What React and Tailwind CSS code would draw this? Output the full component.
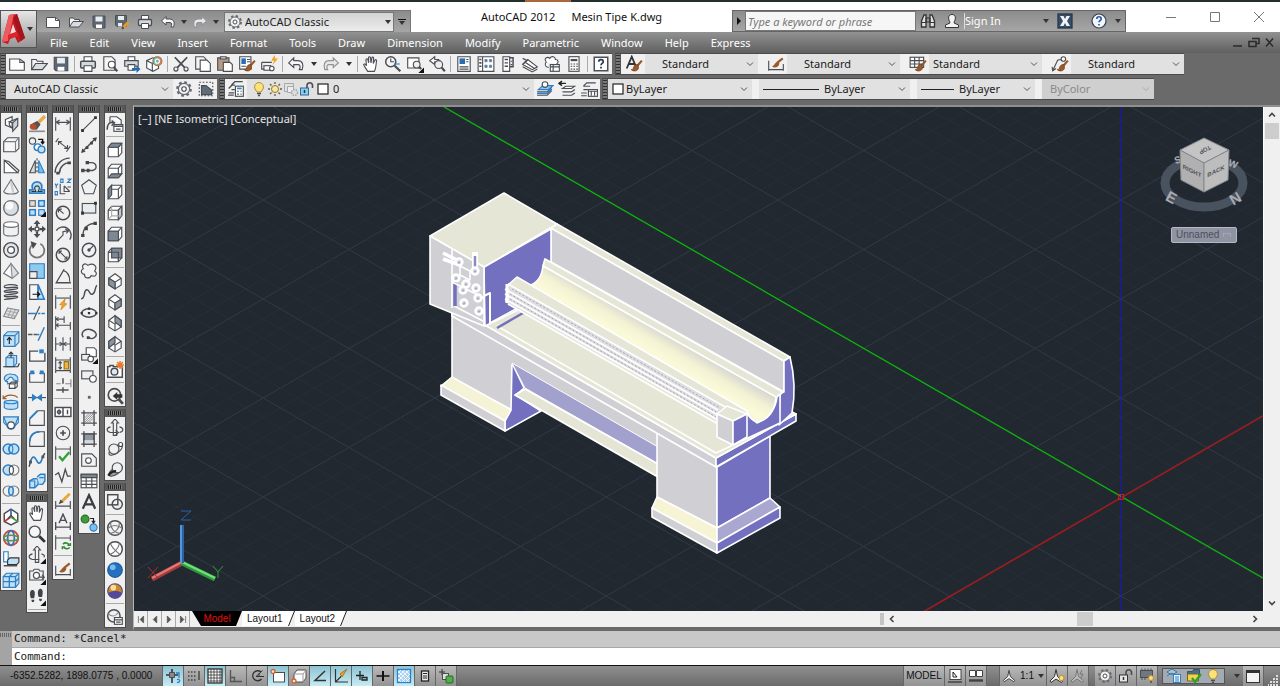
import React, { useState } from "react";

const B = "#2e7fc6";
const LB = "#bfe0f5";
const BR = "#9a5a2c";

const brush = (
  <>
    <path d="M15 5l-4 4.500" stroke={BR} strokeWidth="2" />
    <path d="M11.500 8.500c-2-.5-3.500 1-4 3-.3 1-1 1.500-2 1.500 2 2 6 1.500 6.500-1.500z" fill={BR} stroke="#6d3a17" strokeWidth=".6" />
  </>
);
const cube = (
  <>
    <path d="M2 5.500L5 2h9v8.500L11 14H2z" fill="#fdfdfd" />
    <path d="M2 5.500h9V14M11 5.500L14 2" />
  </>
);
const dimEnds = <path d="M1.500 2v12M14.500 2v12" />;
const iso = (
  <>
    <path d="M8 1.500l5.500 4v6L8 15l-5.500-3.500v-6z" fill="#fbfbfb" />
    <path d="M2.500 5.500L8 9l5.500-3.500M8 9v6" />
  </>
);

const ICONS = {
  new: <><path d="M1.500 3.500h9l4 3v7h-13z" fill="#fff" /><path d="M10.500 3.500v3h4" /></>,
  open: <><path d="M1.500 13V4h4l1 1.500h5V8" fill="#f4f4f4" /><path d="M1.500 13L5 7.500h10.500L11 13z" fill="#d9dde2" /></>,
  save: <><path d="M2 2h12v12H3.500L2 12.500z" fill="#5d6774" /><path d="M4.500 2.500h7v5h-7z" fill="#e8edf2" stroke="none" /><path d="M5 10.500h6V14H5z" fill="#fff" stroke="none" /></>,
  saveas: <><path d="M1.500 1.500h11v11H3L1.500 11z" fill="#5d6774" /><path d="M4 2h6v4H4zM4 9h4v3.500H4z" fill="#e8edf2" stroke="none" /><path d="M14.500 8L9 14" stroke="#e59a28" strokeWidth="3" /><path d="M8 15l.5-2 1.500 1z" fill="#333" /></>,
  print: <><path d="M4.500 6V1.500h7V6" fill="#fff" /><rect x="1.500" y="5.500" width="13" height="6" rx="1" fill="#d5d8dc" strokeWidth="1.300" /><path d="M4.500 9.500h7v5h-7z" fill="#fff" /></>,
  preview: <><path d="M2.500 1.500h7l3 3v9h-10z" fill="#f7f7f7" /><circle cx="9.500" cy="8.500" r="3" fill="#fff" /><path d="M11.500 11l3 3.500" strokeWidth="2" /></>,
  publish: <><path d="M4.500 5V1.500h6V5" fill="#fff" /><path d="M1.500 5h12v5h-12z" fill="#d5d8dc" /><path d="M4.500 8.500h6v5h-6z" fill="#fff" /><path d="M8 11.500h4V9l3.500 3.500L12 16v-2.500H8z" fill="#2468ae" stroke="none" /></>,
  dwf: <><path d="M1.500 5L7 2.500l5 2V12l-5 2.500-5.500-3z" fill="#fff" /><path d="M1.500 5l5 2.500L12 5M6.500 7.500v7" /><circle cx="11" cy="5.500" r="4" fill="#7fc36a" stroke="#777" /><path d="M11 1.500a4 4 0 010 8z" fill="#e27b4b" stroke="none" /><circle cx="11" cy="5.500" r="1.800" fill="#5bb5e0" stroke="#fff" /></>,
  cut: <><path d="M2.500 2l9 9.500M13.500 2l-9 9.500" strokeWidth="1.600" /><circle cx="3.500" cy="12.500" r="1.800" fill="#eee" /><circle cx="12.500" cy="12.500" r="1.800" fill="#eee" /></>,
  copy: <><path d="M1.500 1.500h7l2 2v9h-9z" fill="#f3f3f3" /><path d="M5.500 4.500h6l3 3v7h-9z" fill="#fff" /></>,
  paste: <><path d="M1.500 2.500h10v11h-10z" fill="#b39b86" /><path d="M4 1.500h5v2H4z" fill="#ddd" /><path d="M6.500 6.500h6l2 2v6h-8z" fill="#fff" /></>,
  match: <><path d="M1.500 1.500h10v11h-10z" fill="#fff" /><path d="M3 3h4v5H3z" fill="#2b6cb0" stroke="none" /><path d="M8 4h3M8 6h3M3 10h4" />{brush}</>,
  block: <><path d="M1.500 6.500h9M1.500 6.500v6h9" /><rect x="3.500" y="9.500" width="6" height="4" fill="#fff" /><circle cx="10.500" cy="12" r="2" fill="#fff" /><path d="M13 0l-3 5h2.500L11 9l5-6h-2.500z" fill="#f3a623" stroke="none" /></>,
  undo: <path d="M6 2.500L1.500 7 6 11V8.500h4c2 0 2 2.500 1 4.500h2.500c1.500-4 .5-8-4-8H6z" fill="#f8f8f8" />,
  redo: <path d="M10 2.500L14.500 7 10 11V8.500H6c-2 0-2 2.500-1 4.500H2.500c-1.500-4-.5-8 4-8H10z" fill="#e8e8e8" stroke="#8d9095" />,
  pan: <path d="M5 14.500c-1-2-3-4-3.500-6 .5-1 1.500-.5 2.500 1L3.500 4c.5-1 1.500-.8 1.700.2L6 7l-.2-4.700c.3-1 1.500-1 1.700 0L8 7l.8-4.500c.4-1 1.500-.7 1.500.3L10 7.500l1.500-3c.6-.8 1.600-.3 1.400.7C12.500 8 12.500 12 11 14.500z" fill="#fff" />,
  zoomrt: <><circle cx="6" cy="6" r="4.500" fill="#f5f5f5" strokeWidth="1.300" /><path d="M6 3v3h3" /><path d="M9.500 9.500l5 5" strokeWidth="2" /><path d="M9 8h5" stroke={B} /></>,
  zoomwin: <><path d="M1.500 2.500h10v9h-10z" fill="#fff" /><circle cx="9.500" cy="8.500" r="3" fill="#eee" /><path d="M11.500 10.500l2 2" strokeWidth="2" /><path d="M16 11v5h-5z" fill="#111" stroke="none" /></>,
  zoomprev: <><path d="M6 1.500L1.500 5 6 8.500V6h3.500V4H6z" fill="#fff" /><circle cx="9.500" cy="8.500" r="3.500" fill="#eee" /><path d="M12 11l3 3.500" strokeWidth="2" /></>,
  props: <><path d="M2.500 1.500h11v13h-11z" fill="#fff" /><path d="M4 3h5v5H4z" fill="#2b6cb0" stroke="none" /><path d="M10 4h2M10 6h2M4 10.500h8M4 12.500h8" /></>,
  dcenter: <><path d="M1 1.500h14v13H1zM5 1.500v13" fill="#fff" /><path d="M2 4h2M2 7h2M2 10h2" strokeWidth="1.500" /><path d="M7 4h2v2H7zM11 4h2v2h-2zM7 9h2v2H7zM11 9h2v2h-2z" fill="#5d7894" stroke="#5d7894" strokeWidth=".6" /></>,
  palette: <><path d="M3.500 1.500h6v13h-6z" fill="#fff" /><path d="M9.500 2.500h3v8h-3M5 4h3M5 7h3M5 10h3M11 5v1M11 8v1" strokeWidth="1.300" /></>,
  sheets: <><path d="M1.500 8.500L10 13l4.500-2.500L6 4z" fill="#fff" /><path d="M1.500 10.500L10 15l4.500-2.500M3 6l9 6M1.500 3l4 2-4 3" /></>,
  markup: <><path d="M3 6c-3-3 1-5 3-3 2-3 5-1 5 1 3 0 3 3 1 4M3 6c-2 2-1 5 2 5" fill="#fff" /><rect x="6.500" y="8.500" width="8" height="6" fill="#fff" /><path d="M6.500 10.500h8M9 8.500v6" /></>,
  calc: <><rect x="3.500" y="1.500" width="9" height="13" fill="#fff" /><path d="M5 4.500h6" strokeWidth="2" /><path d="M5 8h1.500M7.500 8H9M10 8h1.500M5 10h1.500M7.500 10H9M10 10h1.500M5 12.500h1.500M7.500 12.500H9M10 12.500h1.500" /></>,
  helpbox: <><rect x="2" y="2" width="12" height="12" fill="#fff" strokeWidth="1.300" /><path d="M6 6c0-2.500 4-2.500 4 0 0 1.500-2 1.500-2 3M8 10.500v1.500" stroke="#23374f" strokeWidth="1.500" /></>,
  textstyle: <><path d="M1.500 12L6 1.500 10 11M3 8h5.500" stroke="#333" strokeWidth="1.600" />{brush}</>,
  dimstyle: <><path d="M1.500 5v9M14.500 8v6M1.500 13h13" /><path d="M14 3L9 7" stroke={BR} strokeWidth="2" /><path d="M10 6c-3 0-3 3-5.500 4.500 3 1.500 6 0 6.500-3z" fill={BR} stroke="none" /></>,
  tablestyle: <><rect x="1" y="2" width="12" height="9" fill="#fff" /><path d="M1 5h12M1 8h12M5 2v9M9 2v9" />{brush}</>,
  mleader: <><path d="M1.500 14L6 4.500 10 4M1 10.500l.5 3.500 3-2" /><circle cx="11" cy="3.500" r="2" fill="#fff" />{brush}</>,
  gear: <><circle cx="8" cy="8" r="6" strokeWidth="2" strokeDasharray="2.400 2.310" stroke="#666a70" /><circle cx="8" cy="8" r="5" fill="#f2f2f2" stroke="#666a70" /><circle cx="8" cy="8" r="2" fill="#fff" /></>,
  wsset: <><path d="M2 2h12v12H2z" strokeDasharray="1.500 1.500" /><path d="M4 13V5h4l5 4v4z" fill="#5f6c7a" /></>,
  layers: <><path d="M4 4.500l3-3h7M4 8.500h3M1.500 11.500h5M4 4.500h3M1.500 7.500l3-3M1 13.500h5" strokeWidth="1.200" /><rect x="7.500" y="5.500" width="7" height="9" fill="#fff" /><path d="M9 7.500h4" stroke={B} strokeWidth="1.500" /><path d="M9 10h1.500M12 10h1M9 12.500h1.500M12 12.500h1" /></>,
  bulb: <><path d="M8 1.500a4.500 4.500 0 014 6.500L10 11H6L4 8a4.500 4.500 0 014-6.500z" fill="#fbe27a" stroke="#b08e37" /><path d="M6 12.500h4M7 14.500h2" strokeWidth="1.500" /></>,
  sun: <><circle cx="8" cy="8" r="3.500" fill="#fbe79a" stroke="#8a7b4a" /><path d="M8 1v2M8 13v2M1 8h2M13 8h2M3 3l1.500 1.500M11.500 11.500L13 13M13 3l-1.500 1.500M4.500 11.500L3 13" stroke="#6b5d33" strokeWidth="1.300" /></>,
  vpfreeze: <g stroke="#a5a8ac"><path d="M1.500 2.500h9v8h-9z" /><path d="M4.500 5.500h6v6h-6z" fill="#eee" /><circle cx="11.500" cy="11.500" r="3" fill="#ddd" strokeDasharray="1.500 1" strokeWidth="1.500" /></g>,
  unlock: <><rect x="1.500" y="7" width="8" height="7" fill="#8ecdf0" stroke="#2c6d9a" /><path d="M8 7V4a2.800 2.800 0 015.500 0v3" strokeWidth="1.600" /><path d="M5.500 9v3" stroke="#1d3c55" strokeWidth="1.500" /></>,
  unlockgray: <><rect x="1.500" y="7" width="8" height="7" fill="#e6e6e6" stroke="#333" /><path d="M8 7V4a2.800 2.800 0 015.500 0v3" strokeWidth="1.600" /><path d="M5.500 9v3" stroke="#333" strokeWidth="1.500" /></>,
  white: <rect x="3" y="3" width="10" height="10" fill="#fff" stroke="#222" strokeWidth="1.200" />,
  laycur: <><path d="M1 13.500h9l4-4M1 10.500h9l4-4" /><path d="M2 8.500l4-3.500h9l-4 3.500z" fill="#8ac6ee" stroke={B} /><circle cx="8" cy="4" r="2.500" fill="#fff" /><path d="M1 12h9l4-4" stroke={B} strokeWidth="1.500" /></>,
  layprev: <><path d="M4 7.500l3-2h8l-3 2zM4 10.500h8l3-2M4 13.500h8l3-2" fill="#fff" /><path d="M1 3h6M3.500 1L1 3l2.500 2" stroke="#222" strokeWidth="1.300" /></>,
  layiso: <><path d="M3 5.500l3-3h8M3 8.500h4M1 11.500h5M3 5.500h6M1 14h5" /><rect x="7.500" y="8.500" width="8" height="6" fill="#fff" /><path d="M7.500 10h8M10 10v4M13 10v4" /></>,
  polysolid: <><path d="M3 4l6-2.500v10L3 9z" fill="#fff" /><path d="M6.500 6l7.500-3v6.500l-4.500 5V7z" fill="#cfd3d7" /><path d="M9.500 7L14 3M6.500 6v3l3 3" /></>,
  box: <><path d="M1.500 5L5 1.500h10V11l-3 3H1.500z" fill="#f6f6f6" /><path d="M1.500 5h10.500v9M12 5l3-3.500" stroke="#7b7f85" /></>,
  wedge: <><path d="M2 3v11h12z" fill="#fff" /><path d="M2 3l4 1 9 8-1 2" /></>,
  cone: <><path d="M8 1.500L1.500 12c1 3 12 3 13 0z" fill="#f2f2f2" stroke="#6b6f75" /><path d="M8 3l2 10" stroke="#c9ccd0" strokeWidth="2" /></>,
  sphere: <><circle cx="8" cy="8" r="6.500" fill="#d9dee3" strokeWidth="1.200" stroke="#6b6f75" /><circle cx="6.500" cy="6" r="3.500" fill="#f8fafb" stroke="none" /></>,
  cylinder: <><path d="M1.500 4v8c0 3 13 3 13 0V4" fill="#f0f1f2" stroke="#6b6f75" /><ellipse cx="8" cy="4" rx="6.500" ry="2.500" fill="#fff" stroke="#6b6f75" /></>,
  torus: <><circle cx="8" cy="8" r="6.500" fill="#e3e6e9" strokeWidth="1.200" /><circle cx="8" cy="8" r="3" fill="#fff" strokeWidth="1.200" /></>,
  pyramid: <><path d="M8 1.500L1.500 10 9 14.500l5.500-4.500z" fill="#fafafa" stroke="#6b6f75" /><path d="M8 1.500l1 13 5.500-4.500z" fill="#dcdfe2" stroke="#8b8f94" /></>,
  helix: <path d="M14 2.500c-4-2-12-1-12 1s12-1 12 1-12 1-12 3 12-1 12 1-12 1-12 3 12-1 12 1-12 1-12 2.500" strokeWidth="1.200" />,
  mesh: <><path d="M5 3.500l10 2L11 13 1.500 11z" fill="#e3e3e3" stroke="#85888c" /><path d="M4 6l9.500 2M3 8.500L12 11M8.500 4L5 12M12 5l-4 7.500" stroke="#a5a8ac" /></>,
  extrude: <><path d="M1.500 5L5 1.500h10V11l-3.500 3.500h-10z" fill={LB} stroke={B} /><path d="M1.500 5h10v9.500M11.500 5L15 1.500" stroke={B} /><path d="M6.500 12.500V7M4.500 9l2-2.500 2 2.500" stroke="#222" /></>,
  presspull: <><path d="M3.500 6L6 4h7v7l-2.500 3h-7z" fill={LB} stroke={B} /><path d="M3.500 6h7v8" stroke={B} /><path d="M1 14h13l1.500-3M8 6V1M6 3l2-2 2 2" stroke="#333" /></>,
  sweep: <><path d="M3 8c-3-4 2-7 6-6 4 0 6 3 5 6l-4-1c0-3-4-3-4-1z" fill={LB} stroke={B} /><path d="M3 8l5 3 5-3M5 8v3" stroke={B} /><path d="M6.500 10.500h5v4h-5zM6.500 10.500L8.500 9h5l-2 1.500M13.500 9v4l-2 1.500" fill="#fff" /></>,
  revolve: <><path d="M2 8c1-2 11-2 12 0v5c-2 2-10 2-12 0z" fill={LB} stroke={B} /><path d="M2 8c2 2 10 2 12 0" stroke={B} /><path d="M1 5c3-4 10-4 13-1M1 2v3h3" stroke={BR} /></>,
  loft: <><path d="M1.500 2.500h13L12 9c-1 6-7 6-8 0z" fill={LB} stroke={B} /><path d="M1.500 2.500v5l3 3M14.500 2.500v5l-3 3" stroke={B} /><circle cx="8" cy="10" r="3" fill="#fff" /></>,
  union: <><circle cx="5.500" cy="8" r="4.500" fill={LB} stroke={B} strokeWidth="1.300" /><circle cx="10.500" cy="8" r="4.500" fill={LB} stroke={B} strokeWidth="1.300" /><ellipse cx="8" cy="8" rx="1.600" ry="3.500" stroke={B} /></>,
  subtract: <><circle cx="10.500" cy="8" r="4.500" fill="#f4f4f4" stroke="#777" /><circle cx="5.500" cy="8" r="4.500" fill={LB} stroke={B} strokeWidth="1.300" /><ellipse cx="8.300" cy="8" rx="1.800" ry="3.500" fill="#fff" /></>,
  intersect: <><circle cx="5.500" cy="8" r="4.500" stroke="#777" /><circle cx="10.500" cy="8" r="4.500" stroke="#777" /><ellipse cx="8" cy="8" rx="2" ry="3.700" fill={LB} stroke={B} strokeWidth="1.300" /></>,
  move3d: <><path d="M8 1l6 4v7l-6 3-6-3V5z" fill="#fff" strokeWidth="1.300" /><path d="M8 8V1" stroke="#2a65c8" strokeWidth="1.500" /><path d="M8 8l-6 4" stroke="#c33" strokeWidth="1.500" /><path d="M8 8l6 4" stroke="#3a3" strokeWidth="1.500" /><path d="M5 9.500l3-3 3 3" /></>,
  rotate3d: <><circle cx="8" cy="8" r="6.500" fill="#f7e0de" stroke="#c0483c" strokeWidth="1.500" /><ellipse cx="8" cy="8" rx="3" ry="6.500" stroke="#3c6fc0" strokeWidth="1.500" /><ellipse cx="8" cy="8" rx="6.500" ry="2.500" stroke="#4a9a55" strokeWidth="1.300" /></>,
  align3d: <><path d="M1.500 1.500h4v9h-4z" fill="#fff" stroke={B} /><path d="M5 9l2-2h8v4l-2 2H5z" fill={LB} stroke="#333" /><path d="M1.500 14h12" strokeWidth="1.300" /></>,
  array3d: <><path d="M1 5l3-3h11v9l-3 3.500H1z" fill={LB} stroke={B} /><path d="M1 5h11v9.500M12 5l3-3M6.500 5v9.500M1 9.500h11l3-3M6.500 5l3-3" stroke={B} strokeWidth="1.200" /></>,
  erase: <><path d="M15 1L7 9" stroke="#e9a94d" strokeWidth="3" /><path d="M8 6l2.500 2.500-3 4-4-.5-1-3z" fill="#555" /><ellipse cx="4.500" cy="10.500" rx="3" ry="2.500" fill="#c24a28" stroke="none" /><path d="M1 14.500h14" stroke="#8a8d91" strokeWidth="1.500" /></>,
  copyobj: <><circle cx="4" cy="4.500" r="2.800" /><path d="M9 3h4v3M11.500 5l1.500 1.800L14.500 5" stroke="#111" strokeWidth="1.300" /><circle cx="8.500" cy="10" r="3" fill="#fff" stroke={B} strokeWidth="1.300" /><circle cx="12" cy="12" r="3" fill={LB} stroke={B} strokeWidth="1.300" /></>,
  mirror: <><path d="M6.500 3v11H1.500z" fill="#d9dcdf" /><path d="M9.500 3v11h5z" fill="#78bce9" stroke={B} /><path d="M8 1v14" strokeDasharray="2 1.500" /></>,
  offset: <><path d="M1.500 13.500v-3h3c-2-4 0-7 3.500-7s5.500 3 3.500 7h3v3z" fill={LB} stroke={B} strokeWidth="1.500" /><path d="M3 12h4c-2-3-1-5 1-5s3 2 1 5h4" stroke="#333" /></>,
  array: <><rect x="1.500" y="1.500" width="5" height="5" fill="#ddd" stroke="#666" /><rect x="9.500" y="1.500" width="5" height="5" fill={LB} stroke={B} strokeWidth="1.300" /><rect x="1.500" y="9.500" width="5" height="5" fill={LB} stroke={B} strokeWidth="1.300" /><rect x="9.500" y="9.500" width="5" height="5" fill={LB} stroke={B} /><path d="M16 11v5h-5z" fill="#111" stroke="none" /></>,
  move: <><rect x="6.500" y="6.500" width="3" height="3" fill="#fff" /><path d="M8 0l3 3.500H9V6H7V3.500H5zM8 16l3-3.500H9V10H7v2.500H5zM0 8l3.500-3v2H6v2H3.500v2zM16 8l-3.500-3v2H10v2h2.500v2z" fill="#4a4e54" stroke="none" /></>,
  rotate: <><path d="M5 2.500a6.500 6.500 0 106 0" strokeWidth="1.600" stroke="#777" /><path d="M3 1l4 1.500L4.500 6z" fill="#444" /></>,
  scale: <><path d="M1.500 1.500h13v13h-13z" fill="#8fcbf0" stroke={B} /><path d="M1.500 8.500h6.500v6H1.500z" fill="#eee" /></>,
  stretch: <><path d="M1.500 1.500H9v13H1.500z" fill="#f5f5f5" /><path d="M9 1.500L14.500 14.500H9z" fill={LB} stroke={B} strokeWidth="1.400" /><path d="M4 10h6M8 8l2.500 2L8 12" stroke="#111" /></>,
  trim: <><path d="M0 8.500h7M9 8.500h2M12 8.500h3" stroke={B} strokeWidth="1.300" /><path d="M10.500 2L5 14" /></>,
  extend: <><path d="M0 8.500h4M5 8.500h3" stroke="#555" strokeWidth="1.300" /><path d="M8 8.500h2" stroke={B} strokeWidth="1.300" /><path d="M14.500 2L9 14" stroke={B} strokeWidth="1.300" /></>,
  breakpt: <><path d="M9 4.500H1.500v9H15V6" fill="#f5f5f5" strokeWidth="1.200" /><path d="M10 3h4v3.500h-4z" fill={B} stroke="none" /></>,
  breakobj: <><path d="M6 5.500H1.500v8h13v-8H10" fill="#f5f5f5" /><path d="M2 3h3.500v3.500H2zM10.500 3H14v3.500h-3.500z" fill={B} stroke="none" /></>,
  join: <><path d="M0 8.500h16" /><path d="M4 6l3.500 2.500L4 11zM12 6L8.500 8.500 12 11z" fill={B} stroke={B} /></>,
  chamfer: <><path d="M1.500 14.500V9L9 1.500h5.500v13z" fill="#f2f2f2" /><path d="M1.500 8.500L8.500 1.500" stroke={B} strokeWidth="1.500" /></>,
  fillet: <><path d="M1.500 14.500V11C1.500 5 5 1.500 11 1.500h3.500v13z" fill="#f2f2f2" /><path d="M1.500 10C2 5 5 2 10 1.500" stroke={B} strokeWidth="1.500" /></>,
  blend: <><path d="M1 14l1-4M13 5l2-3" strokeWidth="1.300" /><path d="M2 10c2-7 4-5 6-1s4 1 5-4" stroke={B} strokeWidth="1.500" /><path d="M1 8.500h2.500V11H1zM12 4h2.500v2.500H12z" fill="#555" stroke="none" /></>,
  explode: <><path d="M1.500 8L5 6h4v5l-3 3H1.500z" fill={LB} stroke={B} strokeWidth="1.300" /><path d="M8 4.500L11 2h4v6l-2 3h-3" fill={LB} stroke={B} strokeWidth="1.300" /><path d="M1.500 8H6v6M10 5h4" stroke={B} /></>,
  zoom: <><circle cx="6" cy="6" r="5" fill="#f5f7f8" strokeWidth="1.300" /><path d="M10 10l5 5" stroke="#333" strokeWidth="2.500" /></>,
  orbit: <><path d="M8 0l3 3.500H9.500v11h-3v-11H5z" fill="#f4f4f4" /><path d="M4 7c-4 1-4 4 0 5h6M12 7c4 1 4 4 0 5M8.500 10l2.500 2-2.500 2.500" /></>,
  orbitdd: <><path d="M8 0l3 3.500H9.500v11h-3v-11H5z" fill="#f4f4f4" /><path d="M4 7c-4 1-4 4 0 5h6M12 7c3 1 3 2 2 3" /><path d="M16 11v5h-5z" fill="#111" stroke="none" /></>,
  cam: <><path d="M1.500 3.500h3l1-1.500h4l1 1.500h3v8h-12z" fill="#f1f1f1" /><circle cx="7.500" cy="7.500" r="2.700" fill="#fff" /><path d="M10 9h4M12.500 7l2 2-2 2" /><path d="M16 11v5h-5z" fill="#111" stroke="none" /></>,
  walk: <><path d="M3 2c2-1 3.500 1 3 4L5.500 9h-3C1.500 6 1.500 3 3 2zM3 10.500h2.500c.5 3-2.500 3-2.500 0zM10 1c2-1 3.500 1 3 4l-.5 3h-3C8.500 5 8.500 2 10 1zM9.800 9.500h2.500c.5 3-2.500 3-2.500 0z" fill="#3f4348" stroke="none" /><path d="M16 11v5h-5z" fill="#111" stroke="none" /></>,
  dlinear: <>{dimEnds}<path d="M2 6.500h12M5 4.500l-3 2 3 2M11 4.500l3 2-3 2" /></>,
  daligned: <><path d="M4 5l8 6M4 2L1.500 5.500M14.500 9L11 14M4 8V5h3M12 8v3H9" /></>,
  darc: <><path d="M1 14C1 7 7 1 14 1M5 14c0-5 4-9 9-9" strokeWidth="1.300" /><path d="M2 13h3v2.500H2zM12 4h3v2.500h-3z" fill="#444" stroke="none" /></>,
  dord: <><path d="M5.500 5v9H10M9 7v5h5M9 7l5 5M12 8h3" /><path d="M1 5l1 2 1.500-2M2 7v2M1 12h2v3H1zM6 1h2v3H6zM12 1h3l-3 3h3" stroke={B} /></>,
  dradius: <><circle cx="8" cy="8" r="6" strokeWidth="1.300" /><path d="M8.500 8.500L4 4.500M4 7.500v-3h3" /></>,
  djog: <><path d="M2 5a7 7 0 0112 8" strokeWidth="1.200" /><path d="M3 14l5-5V6l5-1M10 3.500l3 1.500-2 2.500" /></>,
  ddia: <><circle cx="8" cy="8" r="6" strokeWidth="1.300" /><path d="M4.500 4.500l7 7M4.500 7V4.500H7M11.500 9v2.500H9" /></>,
  dang: <><path d="M9 2L2 14h13" strokeWidth="1.200" /><path d="M8 3c4 1 6 5 6 10" /></>,
  dquick: <>{dimEnds}<path d="M2 4.500h12" /><path d="M10 5l-5 5.500h2.500L6 15l5.500-5.500H9z" fill="#f3a623" stroke="#b87414" strokeWidth=".5" /></>,
  dbase: <><path d="M1.500 2v12M9 2v6M14.500 7v7M2 4.500h7M2 10h12" /><path d="M4 3L2 4.500 4 6M4 8.500L2 10l2 1.500" /></>,
  dcont: <><path d="M1.500 2v12M8 2v12M14.500 2v12M2 8h12" /><path d="M5 6.500L7.500 8 5 9.500M11 6.500L8.500 8l2.500 1.500" /></>,
  dspace: <><path d="M1.500 1v14M14.500 1v14M2 3.500h12M2 13h12" /><path d="M9 5h4v6.500H9z" fill="#f0b53c" stroke="#9a6f12" /><path d="M5.500 5v6.500M4 6.500L5.500 5 7 6.500M4 10l1.500 1.500L7 10" /></>,
  dbreak: <><path d="M8 1v5M8 9v5M2 11.500h11" strokeWidth="1.300" /><path d="M2 6h4M10 6h5M15 2v7" stroke="#888" /></>,
  tol: <><rect x="1" y="4" width="14" height="8" fill="#fff" strokeWidth="1.300" /><path d="M8 4v8M12 6v4" strokeWidth="1.300" /><circle cx="4.500" cy="8" r="1.500" /><path d="M4.500 5.500v5M2.500 8h4" /></>,
  center: <><circle cx="8" cy="8" r="6" /><path d="M8 5.500v5M5.500 8h5" strokeWidth="1.500" /></>,
  inspect: <><path d="M1.500 1v12M14.500 1v8M2 3.500h12" /><path d="M4.500 10l3 3.500 6-7" stroke="#2fa02f" strokeWidth="2" /></>,
  jogline: <path d="M1 8l3-2 3 8 3-11 2 6h3" strokeWidth="1.200" />,
  dimedit: <><path d="M1.500 8v7M14.500 8v7M2 12.500h12" /><path d="M14 1.500L7 8.500" stroke="#e6a73c" strokeWidth="2.600" /><path d="M5 10l1-2.500L7.500 9z" fill="#333" /></>,
  dimtext: <><path d="M1.500 8v7M14.500 8v7M2 12.500h12M4.500 9L8 1l3.500 8M6 6.500h4" strokeWidth="1.200" /></>,
  dimupd: <><path d="M1.500 1v13M14.500 1v5M2 3.500h12" /><path d="M8 9c2-2 5-1 5 1M14 12c-2 2-5 1-5-1M12 10h2.500V8M9.500 11.500H7.500v2" stroke="#2d8a2d" strokeWidth="1.400" /></>,
  line: <><path d="M2.500 13.500l11-11" /><path d="M1 12.500h2.500V15H1zM12.500 1H15v2.500h-2.500z" fill="#333" stroke="none" /></>,
  xline: <><path d="M2 14L14 2" strokeWidth="1.300" /><path d="M1 15l1-4 3 3zM15 1l-4 1 3 3zM5 9h2.500v2.500H5zM9 5h2.500v2.500H9z" fill="#444" stroke="none" /></>,
  pline: <><path d="M2 12h9c5-1 4-7-1-7H7" strokeWidth="1.200" /><path d="M1 10.500h3v3H1zM6 10.500h2.500v3H6zM5 3.500h3v3H5z" fill="#444" stroke="none" /></>,
  polygon: <path d="M8 1.500l6.500 5L12 14H4L1.500 6.500z" fill="#f0f1f2" />,
  rect: <><rect x="2" y="4" width="12" height="8.500" fill="#e9ecee" /><path d="M1 11h2.500v3H1zM12.500 2.500H15V5h-2.500z" fill="#333" stroke="none" /></>,
  arc: <><path d="M2.500 13.500C3 7 6 3.500 13 3" strokeWidth="1.200" /><path d="M1 12.500h3V15H1zM4 6h3v3H4zM12 1.500h3v3h-3z" fill="#444" stroke="none" /></>,
  circle: <><circle cx="8" cy="8" r="6" fill="#f0f1f2" strokeWidth="1.300" /><circle cx="8" cy="8" r="1" fill="#333" /><path d="M8 8l4-4" /></>,
  cloud: <path d="M7 3c-3-3-6 0-4 3-3 1-2 5 1 5 0 4 5 4 6 1 4 2 6-2 3-4 3-4-1-8-6-5z" fill="#f3f3f3" />,
  spline: <path d="M1 14c4 0 2-8 5-8s2 5 5 4 2-6 4-8" strokeWidth="1.300" />,
  ellipse: <><ellipse cx="8" cy="8" rx="6.500" ry="3.700" fill="#eef0f1" strokeWidth="1.300" /><path d="M7 3h2v2H7zM7 7.200h2v1.800H7zM.5 7h2v2h-2zM13.500 7h2v2h-2z" fill="#333" stroke="none" /></>,
  earc: <><path d="M3 11C0 7 4 3 9 4s7 5 4 7-4 1-5 0" strokeWidth="1.300" /><path d="M6 10h2.500v2.500H6z" fill="#444" stroke="none" /></>,
  insert: <><path d="M5.500 1.500h7l2 2v6h-9z" fill="#fff" /><rect x="1.500" y="7.500" width="7" height="5" fill="#eee" /><circle cx="9.500" cy="11.500" r="2.500" fill="#fff" /><path d="M16 11v5h-5z" fill="#111" stroke="none" /></>,
  mkblock: <><rect x="1.500" y="3.500" width="10" height="7" fill="#eef0f1" /><circle cx="11.500" cy="10.500" r="3" fill="#fff" /></>,
  point: <path d="M7 7h2.500v2.500H7z" fill="#666" stroke="none" />,
  hatch: <><path d="M1 3.500h14M1 12.500h14M3.500 1v14M12.500 1v14" strokeWidth="1.200" /><path d="M4 8l4-4M4 12l8-8M8 12l4-4M4 5l1-1M4 10l6-6M6 12l6-6" stroke="#888" strokeWidth=".8" /></>,
  gradient: <><path d="M3.500 3.500h9v9h-9z" fill="#8f979f" /><path d="M1 3.500h14M1 12.500h14M3.500 1v14M12.500 1v14" strokeWidth="1.200" /><path d="M4 9h8v3H4z" fill="#d6dadd" stroke="none" /></>,
  region: <><path d="M1.500 2.500h9l4 4v7h-13z" fill="#f2f2f2" /><circle cx="7.500" cy="8.500" r="2.500" fill="#fff" /></>,
  table: <><rect x="1" y="2" width="14" height="12" fill="#fff" /><path d="M1 2h14v3H1z" fill="#7d858d" /><path d="M1 8h14M1 11h14M5.500 5v9M10.500 5v9" /></>,
  mtext: <path d="M2.500 14L8 2l5.500 12M4.500 10h7" stroke="#3a3d42" strokeWidth="2" />,
  addsel: <><circle cx="4.500" cy="4.500" r="3.500" fill="#3f9c3c" stroke="#276b25" /><circle cx="12" cy="12" r="3.200" fill="#7cc0ef" stroke={B} /><path d="M9 4h3v3M10.500 6L12 8l1.500-2" stroke="#222" /></>,
  views: <><path d="M3.500 1.500h6l4 3v4M3.500 1.500v5" fill="#fff" /><path d="M1 13c0-5 2-7 6-6M5 5l2.500 2L5 9.500" strokeWidth="1.300" /><rect x="7" y="8.500" width="8" height="6" fill="#fff" /><path d="M7 10h8M9 12.500h4" strokeWidth="1.200" /></>,
  vtop: <>{cube}<path d="M2 5.500L5 2h9l-3 3.500z" fill="#7d8894" /></>,
  vbottom: <>{cube}<path d="M2 14l3-3.500h9L11 14z" fill="#7d8894" /></>,
  vleft: <>{cube}<path d="M2 5.500L5 2v8.500L2 14z" fill="#7d8894" /></>,
  vright: <>{cube}<path d="M11 5.500L14 2v8.500L11 14z" fill="#c4cbd1" /><path d="M5 2v8.500L2 14M5 10.500h9" stroke="#aaa" /></>,
  vfront: <>{cube}<path d="M2 5.500h9V14H2z" fill="#7d8894" /></>,
  vback: <>{cube}<path d="M5 2h9v8.500H5z" fill="#7d8894" /><path d="M2 5.500h9V14" /></>,
  isw: <>{iso}<path d="M2.500 5.500L8 9v6l-5.500-3.500z" fill="#8a949e" /></>,
  ise: <>{iso}<path d="M13.500 5.500L8 9v6l5.500-3.500z" fill="#8a949e" /></>,
  ine: <>{iso}<path d="M8 1.500l5.500 4v6L8 7z" fill="#8a949e" /></>,
  inw: <>{iso}<path d="M8 1.500l-5.500 4v6L8 7z" fill="#8a949e" /></>,
  camera: <><path d="M1.500 5h2V4h3v1h8v9.500h-13z" fill="#fff" strokeWidth="1.300" /><circle cx="7.500" cy="9.500" r="3" fill="#ddeaf3" strokeWidth="1.300" /><path d="M12.500 0v7M9 3.500h7M10 1l5 5M15 1l-5 5" stroke="#e8792a" strokeWidth="1.300" /></>,
  goback: <><circle cx="7.500" cy="7" r="5.500" fill="#f1f1f1" strokeWidth="1.500" /><path d="M6 8l4-3.500v2h4.500v3H10v2z" fill="#333" stroke="none" /><path d="M11.500 11l3.500 4" strokeWidth="2.500" /></>,
  forbit: <><ellipse cx="8" cy="9" rx="7" ry="3" transform="rotate(-35 8 8)" /><circle cx="7" cy="8" r="4.500" fill="#f0f0f0" /><circle cx="13" cy="4" r="1.800" fill="#fff" /></>,
  corbit: <><ellipse cx="8" cy="9" rx="7" ry="3" transform="rotate(-35 8 8)" fill="#9aa0a6" /><circle cx="10" cy="6" r="4.500" fill="#f0f0f0" /><path d="M2 13c2-3 4-4 7-4" stroke="#222" strokeWidth="2" /></>,
  wire2d: <><rect x="1.500" y="1.500" width="9" height="9" fill="#f4f4f4" strokeWidth="1.300" /><circle cx="10" cy="10" r="4.500" strokeWidth="1.300" /></>,
  wire3d: <><circle cx="8" cy="8" r="6.500" fill="#f4f4f4" strokeWidth="1.300" /><path d="M4 3c0 6 4 9 9 10M12 3c0 6-4 9-9 10M2 8c4-3 8-3 12 0" stroke="#777" /></>,
  hidden: <><circle cx="8" cy="8" r="6.500" fill="#fdfdfd" strokeWidth="1.300" /><path d="M4 3c1 4 3 5 8.500 10M12 3c-1 4-4 8-8.500 10" stroke="#777" /></>,
  realistic: <><circle cx="8" cy="8" r="6.500" fill="#2272c0" stroke="#1a5a99" /><circle cx="6" cy="5.500" r="2.500" fill="#7db9ea" stroke="none" /></>,
  conceptual: <><circle cx="8" cy="8" r="6.500" fill="#c98a25" stroke="#5a4a8a" /><path d="M2 9.500a6.200 6.200 0 0012 0c-3-2-8-2-12 0z" fill="#54489c" stroke="none" /><circle cx="6.500" cy="5" r="2.500" fill="#fbe08a" stroke="none" /></>,
  vsmanage: <><circle cx="7" cy="7" r="5.500" fill="#f0f0f0" strokeWidth="1.300" /><path d="M2 5c3 3 6 3 9-1" stroke="#888" /><rect x="7.500" y="8.500" width="7" height="6" fill="#fff" /><path d="M7.500 10.500h7M9 12.500h4" /></>,
  binoc: <><path d="M1.500 14V8L4 2h2v12zM14.500 14V8L12 2h-2v12z" fill="#e4e4e4" stroke="#333" strokeWidth="1.300" /><path d="M6 5h4v4H6zM1.500 9.500H6M10 9.500h4.500" stroke="#333" /></>,
  user: <><path d="M8 1.500c3 0 4 2.500 3 5.500-.5 1.500-1 2-1 3l4.500 2v2.500h-13V12L6 10c0-1-.5-1.500-1-3-1-3 0-5.500 3-5.500z" fill="#f4f4f4" stroke="#333" /></>,
  exchange: <><rect x="1" y="1" width="14" height="14" fill="#35506f" stroke="#2b3542" strokeWidth="1.300" /><path d="M3 3h3.500L8 6l1.500-3H13l-3 5 3 5H9.500L8 10l-1.500 3H3l3-5z" fill="#f1f3f5" stroke="none" /></>,
  help: <><circle cx="8" cy="8" r="7" fill="#f3f6fa" stroke="#34404e" strokeWidth="1.200" /><path d="M5.800 6c0-3 4.400-3 4.400 0 0 1.500-2.200 1.500-2.200 3.200M8 11v1.500" stroke="#2a5ea8" strokeWidth="1.700" /></>,
  infer: <><path d="M7 1v14M1 7h12" strokeWidth="1.600" stroke="#333" /><path d="M4.500 4.500h5v5h-5z" fill="#888" /><path d="M11 5h3v5M12 14.500c4 0 3-4 0-3" stroke={B} strokeWidth="1.300" /></>,
  snap: <path d="M2 4h1.500M5 4h1.500M8 4h1.500M2 8h1.500M5 8h1.500M8 8h1.500M2 12h1.500M5 12h1.500M8 12h1.500M13 3v9" stroke="#444" strokeWidth="1.400" />,
  grid: <><rect x="1" y="1" width="14" height="14" fill="#fff" stroke="#333" strokeWidth="1.300" /><path d="M4 1v14M7 1v14M10 1v14M13 1v14M1 4h14M1 7h14M1 10h14M1 13h14" stroke="#333" strokeWidth=".8" /></>,
  ortho: <path d="M2.500 2v11.500H14M2.500 9.500h4v4" stroke="#555" strokeWidth="1.300" />,
  polar: <><path d="M12 4a5 5 0 10.500 7" stroke="#333" strokeWidth="1.300" /><path d="M13.500 2.500L7 8.500h8M10 5v4" stroke="#333" /></>,
  osnap: <><rect x="3.500" y="4.500" width="11" height="9.500" fill="#fff" /><circle cx="3" cy="3.500" r="2" fill="#fbe1cf" stroke="#d2622b" strokeWidth="1.300" /></>,
  osnap3d: <><path d="M3 6l3-4h9v8l-3 4H3z" fill="#fff" /><path d="M3 6h9v8M12 6l3-4" stroke="#999" /><circle cx="3" cy="13" r="2" fill="#fbe1cf" stroke="#d2622b" strokeWidth="1.300" /></>,
  otrack: <path d="M13 3L3 12.500h11" stroke="#333" strokeWidth="1.500" />,
  ducs: <><path d="M2.500 1v13H15M2.500 14l6-6" stroke="#333" strokeWidth="1.200" /><path d="M14 1L9 9l-1-2-1-1z" fill="#eda52f" stroke="#b57615" /></>,
  dyn: <path d="M6 3v9M2 7.500h8M8 9.500h5v2.500H8z" stroke="#222" strokeWidth="1.300" />,
  lwt: <><path d="M1.500 8h13" stroke="#111" strokeWidth="1.500" /><path d="M8 3v10" stroke="#111" strokeWidth="2" /></>,
  tpy: <><rect x="1.500" y="1.500" width="13" height="13" fill="#a9d2f4" stroke={B} strokeWidth="1.300" /><path d="M2 5l3-3M2 9l7-7M2 13l11-11M6 14l8-8M10 14l4-4M2 11l3 3M2 7l7 7M2 3l11 11M6 3l8 8M10 3l4 4" stroke="#fff" strokeWidth=".8" /></>,
  qp: <><rect x="4.500" y="3" width="7" height="10" fill="#eee" stroke="#222" strokeWidth="1.300" /><path d="M6 5.500h4M7 7v4M9 7v4" stroke="#222" /></>,
  cycle: <><path d="M4 1v6M1 4h6" stroke="#333" /><rect x="4.500" y="5.500" width="6" height="6" fill="#ddd" /><rect x="8" y="8" width="7" height="7" rx="1" fill="#4fae48" stroke="#226b20" /></>,
  model: <><rect x="3" y="1.500" width="11" height="10" fill="#fff" stroke="#444" /><path d="M6 4v5h4z" stroke="#222" /><path d="M1 14h14" stroke="#444" strokeWidth="1.500" /></>,
  qview: <><path d="M1.500 2.500h6v6h-6zM8.500 2.500h6v6h-6z" fill="#fff" stroke="#444" /><path d="M1 12.500h14" stroke="#444" strokeWidth="2.500" /></>,
  anno: <path d="M8 1.500l1.500 7 5 4.500-1 1.500L8 11l-5.500 3.500-1-1.500 5-4.500z" fill="#f4f4f4" stroke="#333" />,
  annovis: <><path d="M7 1.500l1.500 7 5 4.500-1 1.500L7 11l-5 3.500-1-1.500L5.500 8.500z" fill="#f4f4f4" stroke="#333" /><circle cx="12.500" cy="10" r="2.500" fill="#fbe27a" stroke="#c68a22" /></>,
  annoauto: <g stroke="#777"><path d="M7 1.500l1.500 7 5 4.500-1 1.500L7 11l-5 3.500-1-1.500L5.500 8.500z" fill="#bbb" /><path d="M12 2l-2 4h3l-2 4" /></g>,
  hwacc: <><rect x="1.500" y="2.500" width="12" height="7" fill="#6f7780" /><path d="M3 2V.5M6 2V.5M9 2V.5M12 2V.5M3 12v-2M6 12v-2" /><circle cx="12" cy="10" r="2.500" fill="#fbe27a" stroke="#c68a22" /><path d="M12 13v2" strokeWidth="1.500" /></>,
  traydoc: <><path d="M1 4l5-3 5 3-5 3zM1 8l5-3 3 2" fill="#9fcbe8" stroke="#49718f" /><rect x="7.500" y="6.500" width="7" height="8" fill="#e8f3fb" stroke={B} /><path d="M9 9h4M9 11h4M9 13h4" stroke={B} /></>,
  traycheck: <><path d="M1.500 3.500h5l1-2h6v7h-12z" fill="#3d6f9b" /><path d="M1.500 6h11v7h-11z" fill="#f1d34b" stroke="#79661a" /><path d="M6 10l3 4 6-8" stroke="#31a02d" strokeWidth="2.300" /></>,
  clean: <><rect x="1.500" y="2.500" width="13" height="12" fill="#f4f4f4" stroke="#333" /><path d="M2 4h12" stroke="#333" strokeWidth="2" /></>,
};

function Icon({ name, className = "size-4" }) {
  return (
    <svg viewBox="0 0 16 16" className={`${className} shrink-0`} fill="none" stroke="#4a4e54" strokeWidth="1" aria-hidden="true">
      {ICONS[name]}
    </svg>
  );
}

function Caret({ className = "" }) {
  return <span className={`block border-x-3 border-t-4 border-x-transparent border-t-[#333] ${className}`} />;
}

function Chevron({ muted }) {
  return (
    <svg viewBox="0 0 8 8" className="pointer-events-none absolute top-1/2 right-1 size-2 -translate-y-1/2" fill="none" stroke={muted ? "#aaa" : "#555"} aria-hidden="true">
      <path d="M1 2.500l3 3 3-3" />
    </svg>
  );
}

function Combo({ label, value, className = "", pad = "pl-4", disabled, children }) {
  return (
    <div className={`relative flex h-full items-center ${disabled ? "bg-[#cfcfcf] text-[#8a8a8a]" : "bg-[#e1e1e1] text-[#1b1b1b]"} ${className}`}>
      {children}
      <select aria-label={label} disabled={disabled} className={`h-full min-w-0 flex-1 appearance-none outline-none ${pad}`}>
        <option>{value}</option>
      </select>
      <Chevron muted={disabled} />
    </div>
  );
}

function Tool({ name }) {
  if (name === "|") return <span className="mx-0.5 h-4 w-px shrink-0 bg-[#a9a9a9]" />;
  if (name === "v") {
    return (
      <button aria-label="More" className="flex h-full w-[13px] items-center justify-center">
        <Caret />
      </button>
    );
  }
  return (
    <button aria-label={name} className="flex h-full w-[22px] shrink-0 items-center justify-center">
      <Icon name={name} className="size-[18px]" />
    </button>
  );
}

function Grip() {
  return <span className="h-full w-1.5 shrink-0 border-x border-[#555] bg-[repeating-linear-gradient(0deg,#333_0_1px,#777_1px_3px)]" />;
}

function Bar({ children }) {
  return <div className="flex h-[22px] items-center border-y border-[#4b4b4b] bg-[#f0f0f0]">{children}</div>;
}

const MENUS = ["File", "Edit", "View", "Insert", "Format", "Tools", "Draw", "Dimension", "Modify", "Parametric", "Window", "Help", "Express"];

const STANDARD = ["new", "open", "save", "|", "print", "preview", "publish", "dwf", "|", "cut", "copy", "paste", "match", "block", "|", "undo", "v", "redo", "v", "|", "pan", "zoomrt", "zoomwin", "zoomprev", "|", "props", "dcenter", "palette", "sheets", "markup", "calc", "|", "helpbox"];

const STYLES = [
  { icon: "textstyle", label: "Text style", pad: "pl-[17px]" },
  { icon: "dimstyle", label: "Dimension style", pad: "pl-[17px]" },
  { icon: "tablestyle", label: "Table style", pad: "pl-1" },
  { icon: "mleader", label: "Multileader style", pad: "pl-[17px]" },
];

// each column holds one or more docked toolbars
const COLUMNS = [
  [["polysolid", "box", "wedge", "cone", "sphere", "cylinder", "torus", "pyramid", "helix", "mesh", "|", "extrude", "presspull", "sweep", "revolve", "loft", "|", "union", "subtract", "intersect", "|", "move3d", "rotate3d", "align3d", "array3d"]],
  [
    ["erase", "copyobj", "mirror", "offset", "array", "move", "rotate", "scale", "stretch", "trim", "extend", "breakpt", "breakobj", "join", "chamfer", "fillet", "blend", "explode"],
    ["pan", "zoom", "orbitdd", "cam", "walk", "|"],
  ],
  [["dlinear", "daligned", "darc", "dord", "|", "dradius", "djog", "ddia", "dang", "|", "dquick", "dbase", "dcont", "dspace", "dbreak", "|", "tol", "center", "inspect", "jogline", "|", "dimedit", "dimtext", "dimupd", "|", "dimstyle"]],
  [["line", "xline", "pline", "polygon", "rect", "arc", "circle", "cloud", "spline", "ellipse", "earc", "insert", "mkblock", "point", "hatch", "gradient", "region", "table", "mtext", "addsel"]],
  [
    ["views", "|", "vtop", "vbottom", "vleft", "vright", "vfront", "vback", "|", "isw", "ise", "ine", "inw", "|", "camera", "|", "goback"],
    ["orbit", "forbit", "corbit"],
    ["wire2d", "|", "wire3d", "hidden", "realistic", "conceptual", "|", "vsmanage"],
  ],
];

const TOGGLES = [
  ["infer", true], ["snap", false], ["grid", true], ["ortho", false], ["polar", false], ["osnap", true], ["osnap3d", false],
  ["otrack", true], ["ducs", true], ["dyn", true], ["lwt", false], ["tpy", true], ["qp", false], ["cycle", false],
];

function Palette({ tools }) {
  return (
    <div className="w-[22px] border-x border-b border-[#4b4b4b] bg-[#f0f0f0]">
      <div className="flex h-2 items-center justify-center bg-[#575757]">
        <span className="h-1 w-3.5 bg-[repeating-linear-gradient(90deg,#222_0_1px,#777_1px_2px)]" />
      </div>
      {tools.map((t, i) =>
        t === "|" ? (
          <div key={i} className="mx-px my-0.5 h-px bg-[#a9a9a9]" />
        ) : (
          <button key={i} aria-label={t} className="flex h-[21px] w-full items-center justify-center">
            <Icon name={t} className="size-[18px]" />
          </button>
        )
      )}
    </div>
  );
}

function Header() {
  return (
    <header className="flex shrink-0 bg-white">
      <div className="flex w-[37px] shrink-0 flex-col bg-[#6a6a6a]">
        <div className="h-2 bg-white" />
        <button aria-label="Application menu" className="flex h-[38px] items-center border border-[#555] bg-linear-to-b from-[#e6e6e6] to-[#989898]">
          <svg viewBox="0 0 26 34" className="h-[34px] w-[26px]" aria-hidden="true">
            <path d="M8 3l8-1 8 24-7 5-3-6-5 2-2 5-6-2z" fill="#c41a22" />
            <path d="M8 3l5-1-6 27-6 1z" fill="#ee5a5d" />
            <path d="M16 2l8 24-4 3L12 6z" fill="#a3141c" />
            <path d="M12 12l3 8-6 2z" fill="#f3d9da" />
            <path d="M7 23l9-3 1 4-10 3z" fill="#e0242c" />
          </svg>
          <Caret />
        </button>
      </div>

      <div className="flex min-w-0 flex-1 flex-col">
        <div className="flex h-[30px] items-end justify-between">
          <div className="flex h-[22px] items-center border-t border-r border-[#777] bg-linear-to-b from-[#8c8c8c] to-[#a6a6a6] pl-2">
            <div className="flex items-center gap-[7px]">
              {["new", "open", "save", "saveas", "print"].map((n) => (
                <button key={n} aria-label={n}><Icon name={n} /></button>
              ))}
              <div className="flex items-center gap-[5px]">
                <button aria-label="undo"><Icon name="undo" /></button>
                <Caret />
                <button aria-label="redo"><Icon name="redo" /></button>
                <Caret />
              </div>
            </div>
            <div className="relative ml-[5px] flex h-5 w-[170px] items-center border border-[#777] bg-linear-to-b from-[#d2d2d2] to-[#ececec] pl-0.5 text-[#222]">
              <Icon name="gear" />
              <select aria-label="Workspace" className="h-full flex-1 appearance-none pl-0.5 outline-none">
                <option>AutoCAD Classic</option>
              </select>
              <Caret className="pointer-events-none absolute right-0.5" />
            </div>
            <button aria-label="Customize" className="flex h-full w-4 flex-col items-center justify-center gap-px">
              <span className="h-px w-2 bg-[#111]" />
              <Caret />
            </button>
          </div>

          <h1 className="flex h-full items-center gap-4 text-[#111]">
            <span>AutoCAD 2012</span>
            <span>Mesin Tipe K.dwg</span>
          </h1>

          <div className="flex h-full items-end">
            <div className="flex h-[22px] w-[394px] items-center border border-[#666] bg-linear-to-b from-[#8c8c8c] to-[#a6a6a6]">
              <button aria-label="Collapse" className="flex w-3 justify-center">
                <span className="border-y-4 border-l-4 border-y-transparent border-l-[#111]" />
              </button>
              <input aria-label="Search" placeholder="Type a keyword or phrase" className="h-full w-[171px] border border-[#777] bg-[#f6f6f6] px-0.5 italic outline-none placeholder:text-[#777]" />
              <button aria-label="Find" className="ml-1"><Icon name="binoc" /></button>
              <button className="ml-2 flex flex-1 items-center gap-1 text-white">
                <Icon name="user" />
                <span className="border-l border-[#ddd]">Sign In</span>
              </button>
              <Caret className="mr-2" />
              <button aria-label="Exchange"><Icon name="exchange" /></button>
              <button aria-label="Help" className="mr-2 ml-[18px]"><Icon name="help" /></button>
              <Caret className="mr-1" />
            </div>
            <div className="flex h-full w-[154px] items-center justify-end gap-[34px] pr-4">
              {["M0 5.500h10", "M.5.5h9v9h-9z", "M0 0l10 10M10 0L0 10"].map((d) => (
                <button key={d} aria-label="Window control">
                  <svg viewBox="0 0 10 10" className="size-2.5" fill="none" stroke="#777"><path d={d} /></svg>
                </button>
              ))}
            </div>
          </div>
        </div>

        <nav className="flex h-[21px] items-center gap-[22px] bg-linear-to-b from-[#929292] to-[#606060] pl-[13px] text-white">
          {MENUS.map((m) => <button key={m}>{m}</button>)}
          <div className="ml-auto flex items-center gap-1 pr-1">
            {["M1 9h9", "M4 1.500h7v5H8M1 4.500h7v5H1z", "M2 1.500l7 8M9 1.500l-7 8"].map((d) => (
              <button key={d} aria-label="Document control">
                <svg viewBox="0 0 12 11" className="h-[11px] w-3" fill="none" stroke="#2a2a2a" strokeWidth="1.500"><path d={d} /></svg>
              </button>
            ))}
          </div>
        </nav>
      </div>
    </header>
  );
}

function Toolbars() {
  return (
    <div className="flex shrink-0 flex-col gap-[3px] pb-[5px]">
      <div className="flex gap-[3px]">
        <Bar>
          <Grip />
          {STANDARD.map((t, i) => <Tool key={i} name={t} />)}
        </Bar>
        <Bar>
          <Grip />
          <div className="ml-0.5 flex h-full gap-[7px]">
            {STYLES.map((s) => (
              <div key={s.icon} className="flex h-full items-center">
                <Tool name={s.icon} />
                <Combo label={s.label} value="Standard" pad={s.pad} className="w-[113px]" />
              </div>
            ))}
          </div>
        </Bar>
      </div>
      <div className="flex gap-0.5">
        <Bar>
          <Grip />
          <Combo label="Workspace" value="AutoCAD Classic" pad="pl-2" className="w-[167px]" />
          <Tool name="gear" />
          <Tool name="wsset" />
        </Bar>
        <Bar>
          <Grip />
          <Tool name="layers" />
          <Combo label="Layer" value="0" pad="pl-0.5" className="w-[287px] pl-1">
            <Icon name="bulb" />
            <Icon name="sun" />
            <Icon name="vpfreeze" />
            <Icon name="unlock" />
            <Icon name="white" />
          </Combo>
          <Tool name="laycur" />
          <Tool name="layprev" />
          <Tool name="layiso" />
        </Bar>
        <Bar>
          <Grip />
          <div className="flex h-full gap-[7px]">
            <Combo label="Color" value="ByLayer" className="w-[144px] pl-0.5" pad="pl-0">
              <Icon name="white" />
            </Combo>
            <Combo label="Linetype" value="ByLayer" pad="pl-[5px]" className="w-[151px] pl-1">
              <span className="h-px w-14 bg-[#222]" />
            </Combo>
            <Combo label="Lineweight" value="ByLayer" pad="pl-[5px]" className="w-[118px] pl-1">
              <span className="h-px w-[33px] bg-[#222]" />
            </Combo>
            <Combo label="Plot style" value="ByColor" pad="pl-2" className="w-[112px]" disabled />
          </div>
        </Bar>
      </div>
    </div>
  );
}

const ORIGIN = { x: 987, y: 390 };
const SLOPE = 0.577;
const MINOR = 19.8;

function Grid() {
  const lines = [];
  for (let i = -60; i <= 60; i++) {
    const major = i % 5 === 0;
    const y = ORIGIN.y + i * MINOR;
    lines.push({ i, y, major });
  }
  return (
    <g strokeWidth="1">
      {lines.map(({ i, y, major }) => (
        <g key={i} stroke={major ? "#323a46" : "#272e39"}>
          <line x1="-100" y1={y - SLOPE * 1087} x2="1300" y2={y + SLOPE * 313} />
          <line x1="-100" y1={y + SLOPE * 1087} x2="1300" y2={y - SLOPE * 313} />
        </g>
      ))}
    </g>
  );
}

function Lathe() {
  return (
    <g transform="translate(-134 -107)" stroke="#fff" strokeWidth="1.600" strokeLinejoin="round">
      {/* left foot */}
      <path d="M452 312L512 346V410L452 378z" fill="#d0d0d4" />
      <path d="M512 363L524 388L516 395L541 411L505 431V420L511 409z" fill="#7370c0" />
      <path d="M452 377L511 410L505 421L441 386z" fill="#f5f3d6" />
      <path d="M441 385L505 421V431L441 395z" fill="#d0d0d4" />
      {/* cross beam and shelf */}
      <path d="M511 348L658 432V448L511 364z" fill="#d0d0d4" stroke="none" />
      <path d="M512 363L658 447V464L525 388z" fill="#a2a0cd" strokeWidth="1" />
      <path d="M515 395L525 389L658 464V477z" fill="#e5e5d6" strokeWidth="2" />
      {/* right foot */}
      <path d="M657 432L717 467V528L657 497z" fill="#d0d0d4" />
      <path d="M717 467L770 436V498L717 528z" fill="#7370c0" />
      <path d="M657 497L717 528V543L652 508z" fill="#f6f4d4" />
      <path d="M652 508L717 543V553L652 517z" fill="#d0d0d4" />
      <path d="M717 528L770 498L780 507L717 543z" fill="#aaa8d0" />
      <path d="M717 543L780 507V518L717 553z" fill="#7370c0" />
      {/* table */}
      <path d="M452 306L716 458V467L452 316z" fill="#d0d0d4" />
      <path d="M716 458L796 414V421L716 467z" fill="#7370c0" />
      <path d="M452 306L530 270L796 414L716 458z" fill="#e5e6d6" />
      <path d="M497 326L716 453L733 445" fill="none" />
      {/* back wall */}
      <path d="M551 228L784 361V392L551 262z" fill="#d0d0d4" />
      <path d="M551 228L557 224L790 357L784 361z" fill="#e5e6d6" />
      <path d="M784 361L790 357Q797 385 792 413L779 425L780 392H784z" fill="#7370c0" />
      {/* head */}
      <path d="M484 267L551 229V265L530 290V304L485 326z" fill="#7370c0" />
      <path d="M430 236L504 193L557 224L484 267z" fill="#e5e6d6" />
      <path d="M430 236L484 267V326L430 304z" fill="#d0d0d4" />
      <path d="M497 328L523 313" stroke="#7370c0" strokeWidth="2.500" />
      <path d="M454 306L483 321M490 323L527 303" />
      {/* bed */}
      <path d="M545 259L783 392L776 398L543 266z" fill="#e5e6d6" strokeWidth="1.800" />
      <path d="M747 414L757 423Q775 415 777 397L780 394V423L733 445V421z" fill="#7370c0" />
      <path d="M543 266L776 397Q774 418 758 422Q750 421 747 411L530 285Q541 282 543 266z" fill="url(#trough)" />
      <path d="M517 277L747 411V414L736 420L508 285z" fill="#e5e6d6" strokeWidth="1.500" />
      <path d="M508 283L727 407L716 418L505 302z" fill="#dedee0" stroke="none" />
      <path d="M508 284L727 408M505 289L718 410M505 294L718 415M505 299L718 420M508 304L718 424" strokeWidth="1.800" />
      <path d="M512 289L720 408M510 294L716 412M510 299L716 417" stroke="#a5a5b4" strokeWidth="1" strokeDasharray="2 2" />
      <path d="M507 284v19" strokeWidth="3" />
      <path d="M717 414L727 406L747 414L733 421z" fill="#e5e6d6" />
      <path d="M717 414L733 421V445L717 437z" fill="#d0d0d4" />
      <path d="M733 421L747 414V437L733 445z" fill="#7370c0" />
      {/* levers and knobs on the head */}
      <path d="M455 282V306" stroke="#7370c0" strokeWidth="3.500" />
      <path d="M452 248V282L484 298M452 282V308M460 266l10 5v9l-10-5z" fill="none" />
      <path d="M443 253l16 8M443 259l14 5" strokeWidth="3.500" />
      <path d="M475 252V272" strokeWidth="6" />
      <path d="M475 256V272" stroke="#8b88c4" strokeWidth="2.500" />
      {[[459, 262], [475, 271], [456, 278], [466, 284], [463, 290], [476, 288], [464, 303], [478, 298], [479, 311]].map(([x, y]) => (
        <g key={`${x}-${y}`}>
          <circle cx={x} cy={y} r="3.500" fill="#dcdce6" strokeWidth="2.400" />
          <path d={`M${x - 1} ${y + 1}l2-1`} stroke="#a5a3d0" />
        </g>
      ))}
      <path d="M484 296L490 293V323" fill="none" strokeWidth="2" />
    </g>
  );
}

function Ucs() {
  return (
    <svg viewBox="0 0 84 80" className="absolute bottom-6 left-2.5 h-20 w-[84px]" fill="none" aria-label="UCS icon">
      <path d="M38 56L8 72" stroke="#a83a3a" strokeWidth="5" />
      <path d="M38 55L8 71" stroke="#e07a75" strokeWidth="2" />
      <path d="M38 56L71 72" stroke="#2d9a3a" strokeWidth="5" />
      <path d="M38 55L71 71" stroke="#74dd7d" strokeWidth="2" />
      <path d="M38 56V18" stroke="#2a62a8" strokeWidth="4" />
      <path d="M37 56V18" stroke="#6aa7e6" strokeWidth="1.500" />
      <path d="M37 4h10L37 13h10" stroke="#2b5fae" />
      <path d="M4 60l10 11M14 60L4 71" stroke="#b02c2c" />
      <path d="M69 59l5 6 5-6M74 65v6" stroke="#2c9a38" />
    </svg>
  );
}

function ViewCube() {
  return (
    <div className="absolute top-7 right-3.5 flex w-[90px] flex-col items-center gap-3">
      <svg viewBox="0 0 90 80" className="h-20 w-[90px]" fontFamily="Liberation Sans, sans-serif" fontWeight="bold" aria-label="View cube">
        <ellipse cx="45" cy="48" rx="39" ry="24" fill="none" stroke="#49525f" strokeWidth="9" />
        <g fill="#a9adb3" fontSize="15" textAnchor="middle">
          <text transform="translate(20 28) rotate(-20)" fontSize="10">S</text>
          <text transform="translate(73 32) rotate(20)" fontSize="10">W</text>
          <text transform="translate(10 67) rotate(28)">E</text>
          <text transform="translate(79 68) rotate(-30)">N</text>
        </g>
        <path d="M45 3L70 15L45 28L21 15z" fill="#c4c4c4" stroke="#85888c" />
        <path d="M21 15L45 28V57L22 45z" fill="#b0b0b1" stroke="#85888c" />
        <path d="M70 15L45 28V57L69 45z" fill="#bdbdbd" stroke="#85888c" />
        <g fill="#505257" textAnchor="middle" fontSize="6">
          <text transform="translate(33 38) skewY(26)">RIGHT</text>
          <text transform="translate(57 38) skewY(-26)">BACK</text>
          <text transform="translate(45 13) rotate(152)">TOP</text>
        </g>
      </svg>
      <button className="flex h-4 w-[66px] items-center gap-1 rounded-xs border border-[#b5b9c4] bg-[#9094a2] px-1 font-[Liberation_Sans,sans-serif] text-[10px] text-[#4c505b]">
        Unnamed
        <span className="h-1 w-2 border border-b-0 border-[#a3a7b3]" />
      </button>
    </div>
  );
}

function Viewport() {
  return (
    <div className="relative min-w-0 flex-1 overflow-hidden bg-[#212830]">
      <svg viewBox="0 0 1129 504" preserveAspectRatio="xMinYMin slice" className="absolute inset-0 size-full" aria-label="Drawing">
        <defs>
          <linearGradient id="trough" gradientUnits="userSpaceOnUse" x1="664" y1="330" x2="644" y2="364">
            <stop offset="0" stopColor="#d2d2d0" />
            <stop offset=".35" stopColor="#f3f2d4" />
            <stop offset=".65" stopColor="#fbfad8" />
            <stop offset="1" stopColor="#f0efda" />
          </linearGradient>
        </defs>
        <Grid />
        <line x1="310" y1="0" x2="1129" y2="471" stroke="#0bb30b" strokeWidth="1.300" />
        <line x1="791" y1="504" x2="1129" y2="309" stroke="#b81414" strokeWidth="1.300" />
        <line x1="987.500" y1="0" x2="987.500" y2="504" stroke="#1616c4" />
        <rect x="984.500" y="387.500" width="5" height="5" fill="none" stroke="#c41a1a" />
        <Lathe />
      </svg>
      <p className="absolute top-1 left-1 text-[#e4e4e4]">[−] [NE Isometric] [Conceptual]</p>
      <ViewCube />
      <Ucs />
    </div>
  );
}

function Arrow({ d }) {
  return (
    <svg viewBox="0 0 8 8" className="size-2" fill="none" stroke="#444" strokeWidth="1.600" aria-hidden="true"><path d={d} /></svg>
  );
}

function LayoutTabs() {
  const navs = ["M1 0v8M7 0L3 4l4 4z", "M6 0L2 4l4 4z", "M2 0l4 4-4 4z", "M1 0l4 4-4 4zM7 0v8"];
  return (
    <div className="flex h-4 shrink-0 bg-[#f0f0f0] font-[Liberation_Sans,sans-serif] text-[10px] text-[#111]">
      <div className="flex pr-0.5">
        {navs.map((d) => (
          <button key={d} aria-label="Scroll tabs" className="flex w-[14px] items-center justify-center border-r border-[#aaa]">
            <svg viewBox="0 0 8 8" className="h-[7px] w-2" fill="#555" stroke="#555" strokeWidth=".8"><path d={d} /></svg>
          </button>
        ))}
      </div>
      <button className="h-[15px] w-[50px] bg-black text-[#e01010] [clip-path:polygon(0_0,100%_0,88%_100%,18%_100%)]">Model</button>
      {["Layout1", "Layout2"].map((t) => (
        <button key={t} className="flex h-[15px] items-center gap-[5px] bg-white pl-[5px]">
          {t}
          <svg viewBox="0 0 7 15" className="h-[15px] w-[7px] bg-[#f0f0f0]" aria-hidden="true">
            <path d="M0 0h6L1 15H0z" fill="#fff" /><path d="M6.500 0l-6 15" stroke="#222" />
          </svg>
        </button>
      ))}
      <div className="ml-auto flex w-[383px] items-center">
        <span className="h-3 w-1 bg-[#c4c4c4]" />
        <button aria-label="Scroll left" className="flex w-4 justify-center"><Arrow d="M5.500 1l-3 3 3 3" /></button>
        <div className="flex h-full flex-1 items-center justify-end"><span className="mr-[154px] h-3.5 w-4 bg-[#cdcdcd]" /></div>
        <button aria-label="Scroll right" className="flex w-4 justify-center"><Arrow d="M2.500 1l3 3-3 3" /></button>
      </div>
      <span className="w-[17px]" />
    </div>
  );
}

function CommandLine({ value, onChange }) {
  return (
    <div className="flex shrink-0 bg-[#a4a4a4] font-[DejaVu_Sans_Mono,monospace] text-[#1a1a1a]">
      <span className="mt-0.5 h-1 w-3 bg-[repeating-linear-gradient(90deg,#666_0_1px,transparent_1px_2px)]" />
      <div className="min-w-0 flex-1">
        <p className="h-[17px] border-b border-[#a8a8a8] bg-[#c8c8c8] pl-0.5">Command: *Cancel*</p>
        <div className="flex h-[17px] items-center bg-white pl-0.5">
          <label htmlFor="cmd">Command:</label>
          <input id="cmd" value={value} onChange={(e) => onChange(e.target.value)} className="h-full flex-1 px-1 outline-none" />
        </div>
      </div>
    </div>
  );
}

function StatusButton({ name, on, onClick }) {
  return (
    <button
      aria-label={name}
      aria-pressed={on}
      onClick={onClick}
      className={`flex h-full w-[21px] items-center justify-center border-r border-[#666] ${on ? "bg-linear-to-b from-[#8fc3d2] to-[#c6ecf4]" : "bg-linear-to-b from-[#b9b9b9] to-[#939393]"}`}
    >
      <Icon name={name} />
    </button>
  );
}

function StatusBar({ toggles, onToggle }) {
  return (
    <footer className="flex h-[21px] shrink-0 items-center border-t border-[#111] bg-linear-to-b from-[#8f8f8f] to-[#6b6b6b] font-[Liberation_Sans,sans-serif] text-[10px] text-[#111]">
      <span className="w-[162px] pl-2.5">-6352.5282, 1898.0775 , 0.0000</span>
      <div className="flex h-full border-l border-[#666]">
        {toggles.map(([name, on], i) => (
          <StatusButton key={name} name={name} on={on} onClick={() => onToggle(i)} />
        ))}
      </div>
      <div className="ml-auto flex h-full items-center">
        <button className="h-full w-[42px] border-x border-[#666] bg-linear-to-b from-[#b9b9b9] to-[#939393]">MODEL</button>
        <StatusButton name="model" />
        <StatusButton name="qview" />
        <button className="ml-3 flex h-full w-12 items-center justify-center gap-1 border-x border-[#666] bg-linear-to-b from-[#b9b9b9] to-[#939393]">
          <Icon name="anno" className="size-3.5" />
          1:1
          <Caret />
        </button>
        <StatusButton name="annovis" />
        <StatusButton name="annoauto" />
        <div className="ml-1.5 flex h-full">
          <StatusButton name="gear" />
          <StatusButton name="unlockgray" />
          <StatusButton name="hwacc" />
        </div>
        <div className="ml-1 flex h-4 w-[63px] items-center justify-evenly border border-[#555] bg-[#a2abb4]">
          <Icon name="traydoc" />
          <Icon name="traycheck" />
          <Icon name="bulb" />
        </div>
        <button aria-label="Status menu" className="ml-1.5 flex h-full w-3 items-center justify-center"><Caret /></button>
        <StatusButton name="clean" />
        <svg viewBox="0 0 12 12" className="ml-1 h-3 w-3 self-end" fill="#ddd" aria-hidden="true">
          <path d="M8 1h2v2H8zM5 4h2v2H5zM8 4h2v2H8zM2 7h2v2H2zM5 7h2v2H5zM8 7h2v2H8zM0 10h1v2H0zM2 10h2v2H2zM5 10h2v2H5zM8 10h2v2H8z" />
        </svg>
      </div>
    </footer>
  );
}

export default function App() {
  const [command, setCommand] = useState("");
  const [toggles, setToggles] = useState(TOGGLES);

  const flip = (index) => {
    setToggles((list) => list.map(([name, on], i) => [name, i === index ? !on : on]));
  };

  return (
    <div className="flex h-screen flex-col overflow-hidden bg-[#6a6a6a] font-[Noto_Sans,sans-serif] text-[11px] leading-4">
      <div className="flex h-0.5 shrink-0 justify-center bg-[#22302c] pr-[184px]">
        <span className="w-[46px] bg-[#a8683c]" />
      </div>
      <Header />
      <Toolbars />

      <main className="flex min-h-0 flex-1">
        <div className="flex shrink-0 items-start gap-1 pr-[7px]">
          {COLUMNS.map((palettes, i) => (
            <div key={i} className="flex flex-col gap-0.5">
              {palettes.map((tools, j) => <Palette key={j} tools={tools} />)}
            </div>
          ))}
        </div>

        <div className="flex min-w-0 flex-1 flex-col border-t-2 border-b-4 border-l border-t-[#8f8f8f] border-b-[#6a6a6a] border-l-[#b5b5b5]">
          <div className="flex min-h-0 flex-1">
            <Viewport />
            <div className="flex w-[17px] flex-col items-center justify-between border-l border-white bg-[#f0f0f0] py-1">
              <div className="flex flex-col items-center gap-1">
                <button aria-label="Scroll up"><Arrow d="M1 5.500l3-3 3 3" /></button>
                <span className="h-4 w-3.5 bg-[#cdcdcd]" />
              </div>
              <button aria-label="Scroll down"><Arrow d="M1 2.500l3 3 3-3" /></button>
            </div>
          </div>
          <LayoutTabs />
        </div>
      </main>

      <CommandLine value={command} onChange={setCommand} />
      <StatusBar toggles={toggles} onToggle={flip} />
    </div>
  );
}
